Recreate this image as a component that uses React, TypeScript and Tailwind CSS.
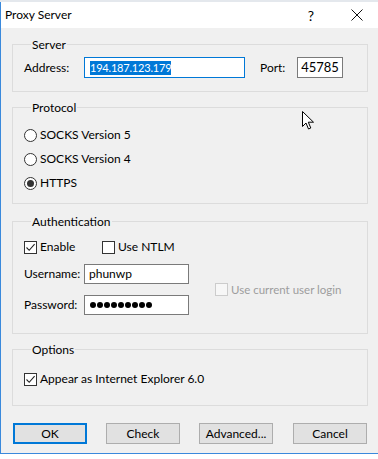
import React from "react";

type BoxProps = { title: string; className?: string; children: React.ReactNode };

const GroupBox: React.FC<BoxProps> = ({ title, className = "", children }) => (
  <fieldset className={`border border-[#dcdcdc] ${className}`}>
    <legend className="ml-[7px] px-[1px] text-[12px] leading-[15px] text-black">{title}</legend>
    {children}
  </fieldset>
);

const CheckMark = () => (
  <svg width="11" height="11" viewBox="0 0 11 11">
    <path d="M1.5 5.5 L4.2 8.3 L9.6 2.2" fill="none" stroke="#222" strokeWidth="1.1" />
  </svg>
);

const Checkbox: React.FC<{ checked?: boolean; disabled?: boolean; label: string; className?: string }> = ({
  checked,
  disabled,
  label,
  className = "",
}) => (
  <div className={`flex items-center ${className}`}>
    <span
      className={`w-[13px] h-[13px] flex items-center justify-center border ${
        disabled ? "border-[#cccccc] bg-[#f7f7f7]" : "border-[#333333] bg-white"
      }`}
    >
      {checked && <CheckMark />}
    </span>
    <span className={`ml-[3px] ${disabled ? "text-[11.5px] text-[#9d9d9d]" : "text-[12px] text-black"}`}>{label}</span>
  </div>
);

const Radio: React.FC<{ checked?: boolean; label: string }> = ({ checked, label }) => (
  <div className="flex items-center h-[24px]">
    <span className="w-[13px] h-[13px] rounded-full border border-[#333333] bg-white flex items-center justify-center">
      {checked && <span className="w-[7px] h-[7px] rounded-full bg-[#333333]" />}
    </span>
    <span className="ml-[3px] text-[12px] text-black">{label}</span>
  </div>
);

const Button: React.FC<{ label: string; focused?: boolean }> = ({ label, focused }) => (
  <button
    className={`w-[74px] h-[21px] bg-[#e1e1e1] text-[12px] text-black flex items-center justify-center ${
      focused ? "border-2 border-[#0078d7]" : "border border-[#adadad]"
    }`}
  >
    {label}
  </button>
);

export default function App() {
  return (
    <div className="w-[378px] h-[459px] overflow-hidden relative bg-white font-['Lato','Liberation_Sans',sans-serif]">
      <div className="h-[2px] bg-[#e4e8ed]" />
      <div className="h-[452px] flex flex-col border-l border-b border-[#3a89dc] bg-[#f0f0f0]">
        {/* title bar */}
        <div className="h-[26px] bg-white flex items-center shrink-0">
          <span className="ml-[4px] text-[12px] text-black">Proxy Server</span>
          <span className="ml-auto text-[14px] text-black mr-[37px]">?</span>
          <svg width="12" height="12" viewBox="0 0 12 12" className="mr-[15px]">
            <path d="M0.5 0.5 L11.5 11.5 M11.5 0.5 L0.5 11.5" stroke="#111" strokeWidth="1" />
          </svg>
        </div>

        <div className="pl-[11px] pr-[10px] flex flex-col">
          <GroupBox title="Server" className="mt-[9px] pt-[5px] pb-[13px] pl-[11px]">
            <div className="flex items-center h-[21px] text-[12px]">
              <span className="w-[60px]">Address:</span>
              <div className="w-[161px] h-[21px] border border-[#0078d7] bg-white flex items-center pl-[5px]">
                <span className="bg-[#0078d7] text-white text-[11px] leading-[14px] tracking-[-0.2px]">194.187.123.179</span>
              </div>
              <span className="ml-[15px] w-[37px]">Port:</span>
              <div className="w-[46px] h-[21px] border border-[#7a7a7a] bg-white flex items-center justify-center text-[13px]">
                45785
              </div>
            </div>
          </GroupBox>

          <GroupBox title="Protocol" className="mt-[8px] pt-[8px] pb-[8px] pl-[11px]">
            <Radio label="SOCKS Version 5" />
            <Radio label="SOCKS Version 4" />
            <Radio checked label="HTTPS" />
          </GroupBox>

          <GroupBox title="Authentication" className="mt-[10px] pt-[8px] pb-[18px] pl-[11px]">
            <div className="flex items-center h-[20px]">
              <Checkbox checked label="Enable" className="w-[78px]" />
              <Checkbox label="Use NTLM" />
            </div>
            <div className="flex mt-[7px]">
              <div className="flex flex-col gap-[11px] text-[12px]">
                <div className="flex items-center h-[20px]">
                  <span className="w-[60px]">Username:</span>
                  <div className="w-[105px] h-[20px] border border-[#7a7a7a] bg-white flex items-center pl-[4px]">
                    phunwp
                  </div>
                </div>
                <div className="flex items-center h-[20px]">
                  <span className="w-[60px]">Password:</span>
                  <div className="w-[105px] h-[20px] border border-[#7a7a7a] bg-white flex items-center pl-[5px] gap-[1px]">
                    {Array.from({ length: 9 }).map((_, i) => (
                      <span key={i} className="w-[6px] h-[6px] rounded-full bg-black" />
                    ))}
                  </div>
                </div>
              </div>
              <Checkbox disabled label="Use current user login" className="ml-[26px] self-center" />
            </div>
          </GroupBox>

          <GroupBox title="Options" className="mt-[8px] pt-[12px] pb-[16px] pl-[11px]">
            <div className="flex items-center h-[20px]">
              <Checkbox checked label="Appear as Internet Explorer 6.0" />
            </div>
          </GroupBox>

          <div className="flex mt-[17px] pl-[1px]">
            <Button label="OK" focused />
            <div className="ml-[19px]">
              <Button label="Check" />
            </div>
            <div className="ml-[19px]">
              <Button label="Advanced..." />
            </div>
            <div className="ml-[20px]">
              <Button label="Cancel" />
            </div>
          </div>
        </div>
      </div>

      {/* mouse pointer */}
      <svg width="13" height="20" viewBox="0 0 13 20" className="absolute left-[302px] top-[111px]">
        <path
          d="M0.5 0.5 L0.5 15.5 L4 12 L6.5 18 L8.8 17 L6.3 11.2 L11.5 11.2 Z"
          fill="white"
          stroke="black"
          strokeWidth="1"
          strokeLinejoin="round"
        />
      </svg>
    </div>
  );
}
